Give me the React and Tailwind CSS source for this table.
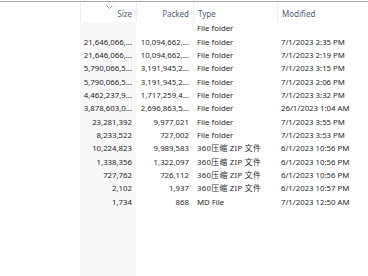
import React from "react";

const rows = [
  { size: "", packed: "", type: "File folder", modified: "" },
  { size: "21,646,066,...", packed: "10,094,662,...", type: "File folder", modified: "7/1/2023 2:35 PM" },
  { size: "21,646,066,...", packed: "10,094,662,...", type: "File folder", modified: "7/1/2023 2:19 PM" },
  { size: "5,790,066,5...", packed: "3,191,945,2...", type: "File folder", modified: "7/1/2023 3:15 PM" },
  { size: "5,790,066,5...", packed: "3,191,945,2...", type: "File folder", modified: "7/1/2023 2:06 PM" },
  { size: "4,462,237,9...", packed: "1,717,259,4...", type: "File folder", modified: "7/1/2023 3:32 PM" },
  { size: "3,878,603,0...", packed: "2,696,863,5...", type: "File folder", modified: "26/1/2023 1:04 AM" },
  { size: "23,281,392", packed: "9,977,021", type: "File folder", modified: "7/1/2023 3:55 PM" },
  { size: "8,233,522", packed: "727,002", type: "File folder", modified: "7/1/2023 3:53 PM" },
  { size: "10,224,823", packed: "9,989,583", type: "360压缩 ZIP 文件", modified: "6/1/2023 10:56 PM" },
  { size: "1,338,356", packed: "1,322,097", type: "360压缩 ZIP 文件", modified: "6/1/2023 10:56 PM" },
  { size: "727,762", packed: "726,112", type: "360压缩 ZIP 文件", modified: "6/1/2023 10:56 PM" },
  { size: "2,102", packed: "1,937", type: "360压缩 ZIP 文件", modified: "6/1/2023 10:57 PM" },
  { size: "1,734", packed: "868", type: "MD File", modified: "7/1/2023 12:50 AM" },
];

const font = { fontFamily: '"Noto Sans", "Noto Sans CJK SC", sans-serif' };

const Column = ({ title, field, width, align, body, sorted, sepLeft }) => {
  return (
    <div className={`flex flex-col h-full ${width}`}>
      <div className={`relative h-[20px] flex items-center pt-[3px] text-[8px] text-[#4c607a] ${sepLeft ? "border-l border-[#ececec]" : ""} ${align === "right" ? "justify-end pr-[4px]" : "pl-[4px]"}`}>
        {sorted && (
          <svg className="absolute left-[25px] top-[3px]" width="7" height="4" viewBox="0 0 7 4">
            <path d="M0.5 0.5 L3.5 3.5 L6.5 0.5" fill="none" stroke="#a0a0a0" strokeWidth="1" />
          </svg>
        )}
        {title}
      </div>
      <div className={`flex-1 pt-[0.5px] ${body || ""}`}>
        {rows.map((r, i) => (
          <div
            key={i}
            className={`h-[13.35px] flex items-center text-[7.8px] text-[#1f1f1f] whitespace-pre ${align === "right" ? "justify-end pr-[4px]" : "pl-[4px]"}`}
          >
            {field === "type" && r.type.startsWith("360") ? (
              <span className="tracking-[0.3px]">360压缩 ZIP 文件</span>
            ) : (
              r[field]
            )}
          </div>
        ))}
      </div>
    </div>
  );
};

export default function App() {
  return (
    <div className="w-[368px] h-[276px] bg-white flex flex-col overflow-hidden" style={font}>
      <div className="h-[1px] bg-white" />
      <div className="h-[1px] bg-[#a8a8a8]" />
      <div className="flex-1 flex">
        <div className="w-[80px]" />
        <Column title="Size" field="size" width="w-[56px]" align="right" body="bg-[#f7f7f7]" sorted sepLeft />
        <Column title="Packed" field="packed" width="w-[57px]" align="right" sepLeft />
        <Column title="Type" field="type" width="w-[84px]" align="left" sepLeft />
        <Column title="Modified" field="modified" width="flex-1" align="left" sepLeft />
      </div>
    </div>
  );
}
